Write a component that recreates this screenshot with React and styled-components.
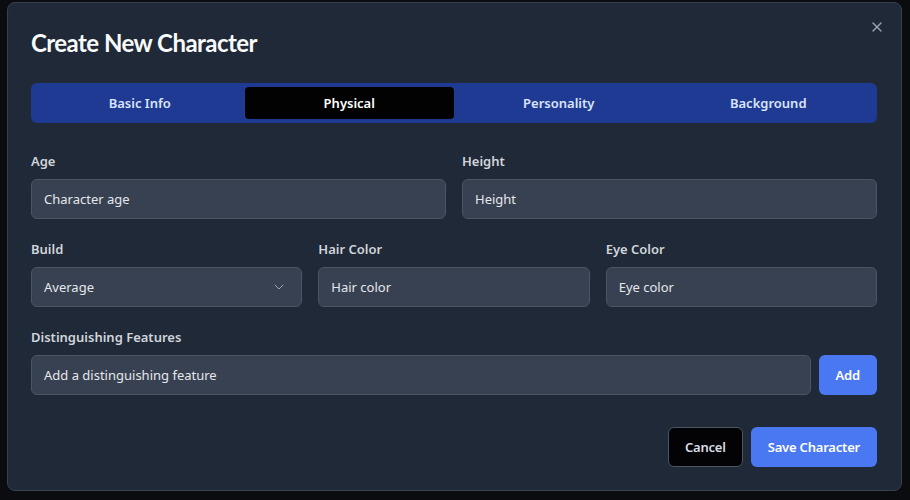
import React from "react";
import styled, { createGlobalStyle } from "styled-components";

const Global = createGlobalStyle`
  html, body { margin: 0; padding: 0; background: #0b0c10; }
  body { font-family: "Noto Sans", "Segoe UI", sans-serif; }
  * { box-sizing: border-box; }
`;

const Page = styled.div`
  width: 910px;
  height: 500px;
  padding: 2px 8px 9px 7px;
  background: #0b0c10;
`;

const Dialog = styled.div`
  position: relative;
  width: 895px;
  height: 489px;
  background: #1f2937;
  border: 1px solid #374151;
  border-radius: 8px;
  padding: 24px 24px 23px 23px;
  display: flex;
  flex-direction: column;
`;

const Title = styled.h2`
  margin: 0;
  font-family: "Lato", "Noto Sans", sans-serif;
  font-size: 24px;
  line-height: 32px;
  font-weight: 700;
  letter-spacing: -0.55px;
  color: #f9fafb;
`;

const Close = styled.button`
  position: absolute;
  top: 16px;
  right: 16px;
  width: 16px;
  height: 16px;
  padding: 0;
  border: none;
  background: none;
  color: #9ca3af;
  display: flex;
  align-items: center;
  justify-content: center;
`;

const TabList = styled.div`
  margin-top: 24px;
  height: 40px;
  padding: 4px;
  border-radius: 6px;
  background: #1f3a93;
  display: grid;
  grid-template-columns: repeat(4, 1fr);
`;

const Tab = styled.div`
  display: flex;
  align-items: center;
  justify-content: center;
  border-radius: 4px;
  font-size: 13px;
  font-weight: 600;
  color: ${(p) => (p.$active ? "#ffffff" : "#dbe4fb")};
  background: ${(p) => (p.$active ? "#020203" : "transparent")};
`;

const Form = styled.div`
  margin-top: 28px;
  display: flex;
  flex-direction: column;
  gap: 20px;
`;

const Row = styled.div`
  display: grid;
  grid-template-columns: repeat(${(p) => p.$cols}, 1fr);
  gap: 16px;
`;

const Field = styled.div`
  display: flex;
  flex-direction: column;
  gap: 8px;
`;

const Label = styled.label`
  font-size: 13px;
  line-height: 20px;
  font-weight: 600;
  color: #d1d5db;
`;

const Input = styled.div`
  height: 40px;
  flex: ${(p) => (p.$grow ? "1 1 auto" : "none")};
  padding: 0 12px;
  display: flex;
  align-items: center;
  justify-content: space-between;
  background: #374151;
  border: 1px solid #4b5563;
  border-radius: 6px;
  font-size: 13px;
  color: #e5e7eb;
`;

const InlineRow = styled.div`
  display: flex;
  gap: 8px;
`;

const Button = styled.button`
  height: 40px;
  padding: 0 16px;
  border-radius: 6px;
  font-family: inherit;
  font-size: 13px;
  font-weight: 600;
  letter-spacing: -0.2px;
  border: 1px solid ${(p) => (p.$variant === "outline" ? "#4b5563" : "transparent")};
  background: ${(p) => (p.$variant === "outline" ? "#030305" : "#4a78f2")};
  color: ${(p) => (p.$variant === "outline" ? "#d8dce3" : "#ffffff")};
`;

const Footer = styled.div`
  margin-top: 32px;
  display: flex;
  justify-content: flex-end;
  gap: 8px;
`;

export default function App() {
  return (
    <>
      <Global />
      <Page>
        <Dialog>
          <Close aria-label="Close">
            <svg width="16" height="16" viewBox="0 0 24 24" fill="none" stroke="currentColor" strokeWidth="2" strokeLinecap="round">
              <path d="M18 6 6 18" />
              <path d="m6 6 12 12" />
            </svg>
          </Close>
          <Title>Create New Character</Title>
          <TabList>
            <Tab>Basic Info</Tab>
            <Tab $active>Physical</Tab>
            <Tab>Personality</Tab>
            <Tab>Background</Tab>
          </TabList>
          <Form>
            <Row $cols={2}>
              <Field>
                <Label>Age</Label>
                <Input>Character age</Input>
              </Field>
              <Field>
                <Label>Height</Label>
                <Input>Height</Input>
              </Field>
            </Row>
            <Row $cols={3}>
              <Field>
                <Label>Build</Label>
                <Input>
                  Average
                  <svg width="16" height="16" viewBox="0 0 24 24" fill="none" stroke="#9ca3af" strokeWidth="1.5" strokeLinecap="round" strokeLinejoin="round" style={{ marginRight: 2 }}>
                    <path d="m6 9 6 6 6-6" />
                  </svg>
                </Input>
              </Field>
              <Field>
                <Label>Hair Color</Label>
                <Input>Hair color</Input>
              </Field>
              <Field>
                <Label>Eye Color</Label>
                <Input>Eye color</Input>
              </Field>
            </Row>
            <Field>
              <Label>Distinguishing Features</Label>
              <InlineRow>
                <Input $grow>Add a distinguishing feature</Input>
                <Button>Add</Button>
              </InlineRow>
            </Field>
          </Form>
          <Footer>
            <Button $variant="outline">Cancel</Button>
            <Button>Save Character</Button>
          </Footer>
        </Dialog>
      </Page>
    </>
  );
}
